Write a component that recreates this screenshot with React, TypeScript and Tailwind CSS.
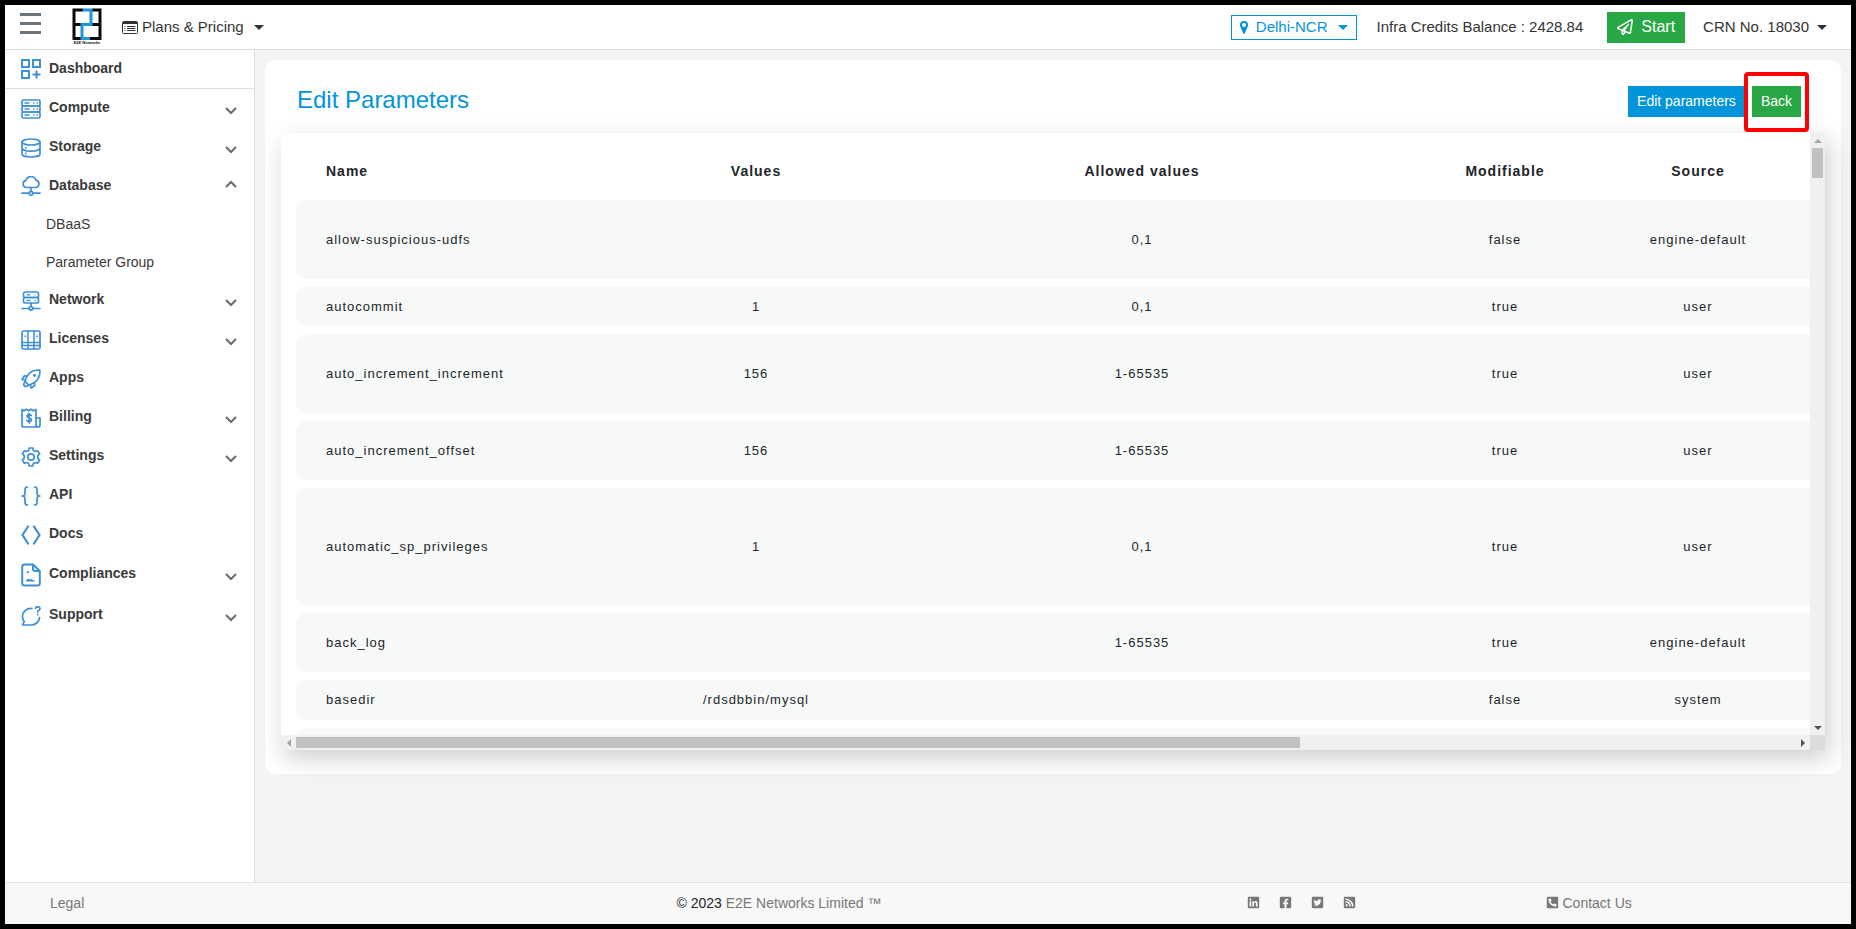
import React from 'react';
import { FaLinkedin, FaFacebookSquare, FaTwitterSquare, FaRssSquare, FaPhoneSquareAlt, FaRegPaperPlane } from 'react-icons/fa';

function NavIcon({ children }: { children: React.ReactNode }) {
    return (
        <svg viewBox="0 0 20 20" className="w-5 h-5 shrink-0 text-[#3d8fd6]" fill="none" stroke="currentColor" strokeWidth="1.7" strokeLinecap="round" strokeLinejoin="round">
            {children}
        </svg>
    );
}

const icons = {
    dashboard: (
        <NavIcon>
            <g strokeLinejoin="miter" strokeLinecap="butt" strokeWidth="2">
                <path d="M1 1h7v7H1zM12 1h7v7h-7zM1 12h7v7H1zM15.500 11.500v8M11.500 15.500h8" />
            </g>
        </NavIcon>
    ),
    compute: (
        <NavIcon>
            <rect x="1" y="1" width="18" height="6" rx="1.500" />
            <rect x="1" y="7" width="18" height="6" rx="1.500" />
            <rect x="1" y="13" width="18" height="6" rx="1.500" />
            <path strokeWidth="1.300" d="M4 4h4M12.500 4h.5M16 4h.5M4 10h4M12.500 10h.5M16 10h.5M4 16h4M12.500 16h.5M16 16h.5" />
        </NavIcon>
    ),
    storage: (
        <NavIcon>
            <ellipse cx="10" cy="4" rx="9" ry="3" />
            <path d="M1 4v12c0 1.700 4 3 9 3s9-1.300 9-3V4M1 10c0 1.900 4 3.200 9 3.200s9-1.300 9-3.200M4.800 9.700v.1M4.800 15.300v.1" />
        </NavIcon>
    ),
    database: (
        <NavIcon>
            <path d="M5.500 11.500a3.600 3.600 0 0 1-.6-7.100 5.200 5.200 0 0 1 10-.2 3.700 3.700 0 0 1 0 7.300zM10 11.500v4M1 17.200h7M12 17.200h7" />
            <circle cx="10" cy="17.200" r="1.800" />
        </NavIcon>
    ),
    network: (
        <NavIcon>
            <rect x="2.500" y="1" width="15" height="5.500" rx="1.800" />
            <rect x="2.500" y="6.500" width="15" height="5.500" rx="1.800" />
            <path strokeWidth="1.300" d="M6 3.800h3M14 3.800h.2M6 9.300h3M14 9.300h.2" />
            <path d="M10 12v3.500M1 17.500h7M12 17.500h7" />
            <circle cx="10" cy="17.300" r="1.800" />
        </NavIcon>
    ),
    licenses: (
        <NavIcon>
            <rect x="1" y="1" width="18" height="18" rx="1.500" />
            <path strokeWidth="1.500" d="M7 1v18M13 1v18M1 12.500h18M1 15.500h18M4.200 6v.8M15.900 6v.8" />
        </NavIcon>
    ),
    apps: (
        <NavIcon>
            <path d="M18.800 1.200c-5.500-.5-10 1.800-12.600 5.800-1.400 2.200-2.200 4.400-2.400 5.200l4 4c1.600-.5 3.800-1.300 6-3 3.700-2.800 5.500-7 5-12zM6.200 7 3.500 6.800 1 10.500l3.500 1M13.500 13.600l.2 2.900-3.500 2.600-.9-3.600M3.500 13.500c-1 1.500-.5 3 0 3.500 1 .6 2.500.4 3.400-.5" />
            <circle cx="13.500" cy="6.300" r=".7" />
        </NavIcon>
    ),
    billing: (
        <NavIcon>
            <path d="M1 1.500l2 1.300 2.300-1.500 2.300 1.500 2.300-1.500 2.300 1.500L15 1.500V19H3a2 2 0 0 1-2-2zM15 10h4v7a2 2 0 0 1-4 0M10.300 7.600C9.800 6.900 9 6.700 8 6.700c-1.200 0-2 .6-2 1.600 0 2.300 4.400 1.200 4.400 3.500 0 1.100-.9 1.700-2.200 1.700-1 0-1.900-.3-2.400-1M8.200 5.300v9.600" />
        </NavIcon>
    ),
    settings: (
        <NavIcon>
            <path d="M8.200 1h3.600l.6 2.500 1.700 1 2.500-.8 2 3.100-1.800 1.900v2.600l1.800 1.900-2 3.100-2.500-.8-1.700 1-.6 2.500H8.200l-.6-2.500-1.700-1-2.500.8-2-3.100 1.800-1.900V8.700L1.400 6.800l2-3.100 2.500.8 1.700-1z" />
            <circle cx="10" cy="10" r="3.200" />
        </NavIcon>
    ),
    api: (
        <NavIcon>
            <path d="M6.500 1C4.500 1 4 2 4 3.500v3.700C4 9 3 10 1.200 10 3 10 4 11 4 12.800v3.700C4 18 4.500 19 6.500 19M13.500 1c2 0 2.500 1 2.500 2.500v3.700c0 1.800 1 2.800 2.800 2.800-1.800 0-2.800 1-2.800 2.800v3.700c0 1.500-.5 2.500-2.500 2.500" />
        </NavIcon>
    ),
    docs: (
        <NavIcon>
            <path strokeWidth="2.200" d="M7 1.500 1.500 10 7 18.500M13 1.500 18.500 10 13 18.500" />
        </NavIcon>
    ),
    compliances: (
        <svg viewBox="0 0 20 24" className="w-5 h-6 shrink-0 text-[#3d8fd6]" fill="none" stroke="currentColor" strokeWidth="2" strokeLinecap="round" strokeLinejoin="round">
            <path d="M12 1.500H3.500a2.300 2.300 0 0 0-2.300 2.300v16.400a2.300 2.300 0 0 0 2.300 2.300h13a2.300 2.300 0 0 0 2.300-2.300V8zM12 1.500V6a2 2 0 0 0 2 2h4.800M6.500 9.200h.6" />
            <path d="M5 18.500c.5-3 3-3.500 4-1.500.8-1.500 2.200-1 2.500.3 1-.7 2.200 0 2.500 1.200z" fill="currentColor" stroke="none" />
        </svg>
    ),
    support: (
        <NavIcon>
            <path d="M11 2.500a8.300 8.300 0 0 0-9.500 8.200c0 2 .7 3.600 1.700 5L1.500 19H10a8.500 8.500 0 0 0 8.600-7.300M14.500 2.200C15 1 16 .8 16.800.8c1.200 0 2.200.8 2.200 1.900 0 1.600-2.200 1.600-2.200 3.200M16.800 8.500v.2" />
        </NavIcon>
    ),
};

const navItems = [
    { label: 'Compute', icon: icons.compute, chevron: 'down', height: 'h-[39px]' },
    { label: 'Storage', icon: icons.storage, chevron: 'down', height: 'h-[39px]' },
    { label: 'Database', icon: icons.database, chevron: 'up', height: 'h-[38px]', children: ['DBaaS', 'Parameter Group'] },
    { label: 'Network', icon: icons.network, chevron: 'down', height: 'h-[39px]' },
    { label: 'Licenses', icon: icons.licenses, chevron: 'down', height: 'h-[39px]' },
    { label: 'Apps', icon: icons.apps, height: 'h-[39px]' },
    { label: 'Billing', icon: icons.billing, chevron: 'down', height: 'h-[39px]' },
    { label: 'Settings', icon: icons.settings, chevron: 'down', height: 'h-[39px]' },
    { label: 'API', icon: icons.api, height: 'h-[39px]' },
    { label: 'Docs', icon: icons.docs, height: 'h-[39px]' },
    { label: 'Compliances', icon: icons.compliances, chevron: 'down', height: 'h-[41px]' },
    { label: 'Support', icon: icons.support, chevron: 'down', height: 'h-[41px]' },
];

const parameters = [
    { name: 'allow-suspicious-udfs', value: '', allowed: '0,1', modifiable: 'false', source: 'engine-default', height: 'h-[79px]' },
    { name: 'autocommit', value: '1', allowed: '0,1', modifiable: 'true', source: 'user', height: 'h-[39px]' },
    { name: 'auto_increment_increment', value: '156', allowed: '1-65535', modifiable: 'true', source: 'user', height: 'h-[79px]' },
    { name: 'auto_increment_offset', value: '156', allowed: '1-65535', modifiable: 'true', source: 'user', height: 'h-[59px]' },
    { name: 'automatic_sp_privileges', value: '1', allowed: '0,1', modifiable: 'true', source: 'user', height: 'h-[117px]' },
    { name: 'back_log', value: '', allowed: '1-65535', modifiable: 'true', source: 'engine-default', height: 'h-[59px]' },
    { name: 'basedir', value: '/rdsdbbin/mysql', allowed: '', modifiable: 'false', source: 'system', height: 'h-[40px]' },
    { name: '', value: '', allowed: '', modifiable: '', source: '', height: 'h-[40px]' },
];

const socials = [
    { label: 'LinkedIn', Icon: FaLinkedin },
    { label: 'Facebook', Icon: FaFacebookSquare },
    { label: 'Twitter', Icon: FaTwitterSquare },
    { label: 'RSS', Icon: FaRssSquare },
];

function Caret() {
    return <span className="border-x-5 border-t-5 border-x-transparent border-t-current" />;
}

function Chevron({ up }: { up: boolean }) {
    return (
        <svg viewBox="0 0 12 8" className={up ? 'w-3 h-2 mb-1' : 'w-3 h-2 mt-1'} fill="none" stroke="#6b6b6b" strokeWidth="2">
            <path d={up ? 'M1 7l5-5 5 5' : 'M1 1l5 5 5-5'} />
        </svg>
    );
}

function Logo() {
    return (
        <svg viewBox="0 0 30 38" className="w-[30px] h-[38px]">
            <g fill="none" strokeWidth="3">
                <path stroke="#0a0a0a" d="M11 2H2v28.500h7M20 2h8v28.500H17M2 16.500h7M20 16.500h8" />
                <path stroke="#1e96d9" d="M10.500 2h8.500v14.500h-9v14h8" />
            </g>
            <text x="15" y="36" fontSize="4" fontWeight="bold" textAnchor="middle" fill="#111">E2E Networks</text>
        </svg>
    );
}

function Header() {
    return (
        <header className="h-[45px] shrink-0 flex items-center bg-white border-b border-[#dcdcdc] text-[#333]">
            <button aria-label="Toggle menu" className="ml-[15px] mb-2 flex flex-col gap-[6px]">
                <span className="w-[21px] h-[3px] bg-[#6c757d]" />
                <span className="w-[21px] h-[3px] bg-[#6c757d]" />
                <span className="w-[21px] h-[3px] bg-[#6c757d]" />
            </button>
            <a href="#" aria-label="Home" className="ml-[31px]"><Logo /></a>
            <button className="ml-5 flex items-center text-[15px]">
                <svg viewBox="0 0 16 13" className="w-4 h-[13px] mr-1" fill="none" stroke="#333">
                    <rect x=".5" y=".5" width="15" height="12" rx="1" />
                    <path strokeWidth="2" d="M1 2h14" />
                    <path d="M2.500 5.500h1M2.500 7.500h1M2.500 9.500h1M5 5.500h8.500M5 7.500h8.500M5 9.500h8.500" />
                </svg>
                <span className="mr-[10px]">Plans &amp; Pricing</span>
                <Caret />
            </button>
            <div className="ml-auto flex items-center mr-6">
                <button className="h-[25px] px-2 flex items-center border border-[#0095da] text-[#0095da] text-[15px]">
                    <svg viewBox="0 0 8 13" className="w-2 h-[13px] mr-2" fill="currentColor">
                        <path fillRule="evenodd" d="M4 0a4 4 0 0 1 4 4c0 .7-.1 1.200-.4 1.800L4.700 12.500c-.3.600-1.100.6-1.400 0L.4 5.800C.1 5.200 0 4.700 0 4a4 4 0 0 1 4-4zm0 2a2 2 0 1 0 0 4 2 2 0 0 0 0-4z" />
                    </svg>
                    <span className="mr-[10px]">Delhi-NCR</span>
                    <Caret />
                </button>
                <span className="ml-5 text-[15px]">Infra Credits Balance : 2428.84</span>
                <button className="ml-6 h-[31px] px-[10px] flex items-center gap-2 bg-[#28a745] text-white text-base">
                    <FaRegPaperPlane className="w-4 h-4" />
                    Start
                </button>
                <button className="ml-[18px] flex items-center text-[15px]">
                    <span className="mr-2">CRN No. 18030</span>
                    <Caret />
                </button>
            </div>
        </header>
    );
}

function Sidebar() {
    return (
        <nav className="w-[250px] shrink-0 bg-white border-r border-[#dcdcdc] text-sm text-[#3a3a3a]">
            <a href="#" className="h-[39px] pl-4 flex items-center gap-2 font-bold border-b border-[#dcdcdc]">
                {icons.dashboard}
                <span className="mb-0.5">Dashboard</span>
            </a>
            {navItems.map(item => (
                <div key={item.label}>
                    <button className={`${item.height} w-full pl-4 pr-[17px] flex items-center gap-2 font-bold`}>
                        {item.icon}
                        <span className="mb-[3px]">{item.label}</span>
                        {item.chevron && <span className="ml-auto"><Chevron up={item.chevron === 'up'} /></span>}
                    </button>
                    {item.children?.map(child => (
                        <a key={child} href="#" className="h-[38px] pl-[41px] flex items-center">{child}</a>
                    ))}
                </div>
            ))}
        </nav>
    );
}

function ParameterTable() {
    return (
        <table className="w-[2204px] table-fixed border-separate border-spacing-x-0 border-spacing-y-2 text-[13px] tracking-[1px] text-[#212529]">
            <colgroup>
                <col className="w-[339px]" />
                <col className="w-[242px]" />
                <col className="w-[530px]" />
                <col className="w-[196px]" />
                <col className="w-[190px]" />
                <col />
            </colgroup>
            <thead>
                <tr className="h-[43px] text-sm">
                    <th className="pl-[30px] text-left">Name</th>
                    <th>Values</th>
                    <th>Allowed values</th>
                    <th>Modifiable</th>
                    <th>Source</th>
                    <td />
                </tr>
            </thead>
            <tbody>
                {parameters.map(param => (
                    <tr key={param.name} className={`${param.height} text-center`}>
                        <td className="pl-[30px] text-left bg-[#f7f9f8] rounded-l-[10px]">{param.name}</td>
                        <td className="bg-[#f7f9f8]">{param.value}</td>
                        <td className="bg-[#f7f9f8]">{param.allowed}</td>
                        <td className="bg-[#f7f9f8]">{param.modifiable}</td>
                        <td className="bg-[#f7f9f8]">{param.source}</td>
                        <td className="bg-[#f7f9f8] rounded-r-[10px]" />
                    </tr>
                ))}
            </tbody>
        </table>
    );
}

function VerticalScrollbar() {
    return (
        <div className="w-[15px] bg-[#f0f0f0] flex flex-col items-center">
            <div className="h-[15px] flex items-center">
                <span className="border-x-4 border-b-4 border-x-transparent border-b-[#a3a3a3]" />
            </div>
            <div className="w-[11px] h-[30px] bg-[#c1c1c1]" />
            <div className="h-[15px] mt-auto flex items-center">
                <span className="border-x-4 border-t-4 border-x-transparent border-t-[#505050]" />
            </div>
        </div>
    );
}

function HorizontalScrollbar() {
    return (
        <div className="h-[15px] bg-[#f0f0f0] flex items-center">
            <div className="w-[15px] flex justify-center">
                <span className="border-y-4 border-r-4 border-y-transparent border-r-[#a3a3a3]" />
            </div>
            <div className="flex-1">
                <div className="w-[67%] h-[11px] bg-[#c1c1c1]" />
            </div>
            <div className="w-[15px] flex justify-center">
                <span className="border-y-4 border-l-4 border-y-transparent border-l-[#505050]" />
            </div>
        </div>
    );
}

function Footer() {
    return (
        <footer className="h-[42px] pb-0.5 shrink-0 grid grid-cols-4 items-center bg-[#f8f8f8] border-t border-[#e2e2e2] text-sm text-[#777]">
            <a href="#" className="pl-[45px]">Legal</a>
            <p className="pl-[210px] whitespace-nowrap"><span className="text-[#212529]">© 2023</span> E2E Networks Limited ™</p>
            <div className="pl-[319px] flex gap-[19px]">
                {socials.map(({ label, Icon }) => (
                    <a key={label} href="#" aria-label={label}><Icon className="w-[13px] h-[13px]" /></a>
                ))}
            </div>
            <a href="#" className="pl-[156px] flex items-center gap-1"><FaPhoneSquareAlt className="w-[13px] h-[13px]" />Contact Us</a>
        </footer>
    );
}

export default function App() {
    return (
        <div className="min-h-screen flex flex-col border-5 border-black bg-[#f4f4f4] font-['Liberation_Sans',Arial,sans-serif]">
            <Header />
            <div className="flex-1 flex">
                <Sidebar />
                <main className="flex-1 min-w-0 p-[10px]">
                    <section className="bg-white rounded-[10px] px-4 pt-3 pb-6">
                        <div className="flex items-center h-[60px] mb-px px-4">
                            <h1 className="text-2xl text-[#0095da] mb-1">Edit Parameters</h1>
                            <button className="ml-auto mb-0.5 h-[31px] pl-[9px] pr-2 bg-[#0095da] text-white text-sm">Edit parameters</button>
                            <div className="h-[60px] px-1 pb-0.5 flex items-center border-4 border-[#f00] rounded-sm">
                                <button className="h-[31px] px-[9px] bg-[#28a745] text-white text-sm">Back</button>
                            </div>
                        </div>
                        <div className="grid grid-cols-[minmax(0,1fr)_15px] rounded-tl-[10px] bg-white shadow-[4px_8px_24px_rgba(0,0,0,0.2)]">
                            <div className="h-[602px] pl-[15px] pt-2 overflow-hidden">
                                <ParameterTable />
                            </div>
                            <VerticalScrollbar />
                            <HorizontalScrollbar />
                            <div className="bg-[#dcdcdc]" />
                        </div>
                    </section>
                </main>
            </div>
            <Footer />
        </div>
    );
}
